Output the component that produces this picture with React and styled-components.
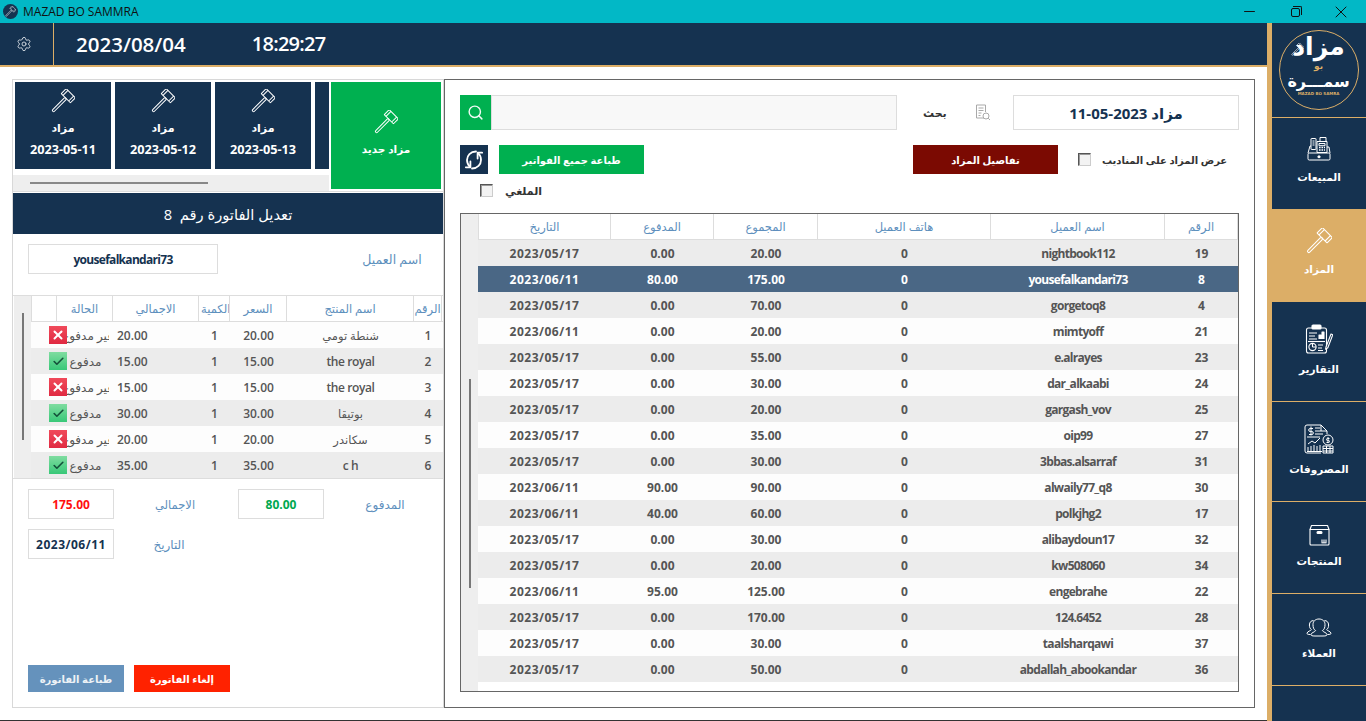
import React from 'react';
import styled, { createGlobalStyle } from 'styled-components';
import { Settings, Search, Minus, X, Check } from 'lucide-react';

const NAVY = '#153250';
const GOLD = '#dcae67';
const FONT = '"Open Sans", "Noto Sans", "DejaVu Sans", sans-serif';

const Global = createGlobalStyle`
  html, body { margin: 0; padding: 0; background: #fff; overflow: hidden; }
  * { box-sizing: border-box; }
  body { font-family: ${FONT}; }
`;

const Page = styled.div`width: 1366px; height: 721px; display: flex; flex-direction: column; overflow: hidden;`;
const TitleBar = styled.div`height: 23px; background: #02b8c6; display: flex; align-items: center; padding: 0 2px 0 3px; color: #111; font-size: 12px; flex: none;`;
const AppDot = styled.span`width: 15px; height: 15px; border-radius: 50%; background: ${NAVY}; margin-right: 5px; display: flex; align-items: center; justify-content: center; color: #fff;`;
const TitleText = styled.span`flex: 1;`;
const WinButton = styled.span`width: 46px; display: flex; justify-content: center; align-items: center; color: #111;`;
const Restore = styled.span`width: 9px; height: 9px; border: 1px solid #111; border-radius: 2px; position: relative; display: block; margin-top: 2px;
  &::after { content: ''; position: absolute; top: -3px; right: -3px; width: 8px; height: 8px; border-top: 1px solid #111; border-right: 1px solid #111; border-radius: 0 2px 0 0; }
`;
const Work = styled.div`flex: 1; display: flex; min-height: 0;`;
const Content = styled.div`width: 1267px; display: flex; flex-direction: column; border-bottom: 1px solid #333;`;
const Header = styled.div`height: 44px; background: ${NAVY}; border-bottom: 2px solid ${GOLD}; display: flex; color: #fff; flex: none;`;
const GearCell = styled.div`width: 54px; border-right: 1px solid ${GOLD}; display: flex; align-items: center; justify-content: center; padding-right: 5px; color: #dfe4ea;`;
const Clock = styled.div`font-size: ${p => p.$fs}px; letter-spacing: ${p => p.$ls}px; font-weight: 600; line-height: 42px; margin-left: ${p => p.$gap}px;`;
const Main = styled.div`display: flex; padding: 12px 0 0 12px; height: 641px;`;

const LeftPanel = styled.section`width: 432px; height: 629px; border: 1px solid #d8d8d8; display: flex; flex-direction: column;`;
const TopBand = styled.div`display: flex; height: 112px; flex: none; border-bottom: 1px solid #ddd;`;
const TileColumn = styled.div`width: 316px; display: flex; flex-direction: column;`;
const TileStrip = styled.div`display: flex; gap: 4px; padding: 2px 0 0 2px; overflow: hidden; height: 95px;`;
const Tile = styled.div`width: 96px; height: 87px; flex: none; background: ${NAVY}; color: #fff; display: flex; flex-direction: column; align-items: center; padding-top: 7px; font-weight: 700;`;
const TileLabel = styled.div`margin-top: 7px; line-height: 16px; font-size: 11px;`;
const TileDate = styled.div`margin-top: 5px; line-height: 16px; font-size: 12.7px;`;
const HScroll = styled.div`height: 16px; background: #eee; padding: 7px 0 0 17px;`;
const HThumb = styled.div`width: 178px; height: 2px; background: #888;`;
const NewTile = styled.div`width: 110px; height: 107px; margin: 2px 0 0 2px; background: #00b050; color: #fff; display: flex; flex-direction: column; align-items: center; padding-top: 28px; font-size: 10.5px; font-weight: 700;`;
const NewLabel = styled.div`margin-top: 6px; line-height: 18px;`;
const InvoiceTitle = styled.div`height: 41px; margin-top: 1px; background: ${NAVY}; color: #fff; display: flex; align-items: center; justify-content: center; font-size: 14.7px; font-weight: 500; flex: none; direction: rtl; white-space: pre;`;
const CustomerRow = styled.div`display: flex; align-items: center; padding: 10px 0 0 15px; height: 40px; flex: none;`;
const ValueBox = styled.div`width: ${p => p.$w}px; height: 30px; margin-left: ${p => p.$ml || 0}px; border: 1px solid #ddd; background: #fff; display: flex; align-items: center; justify-content: center; font-size: 12px; font-weight: 700; letter-spacing: ${p => p.$ls || 0}px; color: ${p => p.$color || NAVY}; flex: none;`;
const FieldLabel = styled.div`color: #5d8fbd; font-size: ${p => p.$fs || 12}px; font-weight: 500; text-align: center; width: ${p => p.$w}px; flex: none; margin-left: ${p => p.$ml || 0}px; white-space: nowrap;`;

const ItemsTable = styled.div`margin-top: 21px; height: 184px; border-top: 1px solid #ddd; border-bottom: 1px solid #ddd; display: flex; flex: none; padding-left: 1px;`;
const Gutter = styled.div`width: 17px; background: #eee; flex: none; padding: ${p => p.$top}px 0 0 8px;`;
const VThumb = styled.div`width: 2px; height: ${p => p.$h}px; background: #777;`;
const TableBody = styled.div`flex: 1; min-width: 0; display: flex; flex-direction: column; background: #fff;`;
const Row = styled.div`display: grid; grid-template-columns: ${p => p.$cols}; height: 26px; flex: none; align-items: center; position: relative; background: ${p => p.$selected ? '#4a6785' : p.$grey ? '#ececec' : '#fdfdfd'}; color: ${p => p.$selected ? '#fff' : '#555'}; font-size: 12px; font-weight: ${p => p.$fw || 600};`;
const HeadRow = styled.div`display: grid; grid-template-columns: ${p => p.$cols}; height: 26px; flex: none; background: #fff; border-bottom: 1px solid #ddd; color: #5d8fbd; font-size: 11.5px; font-weight: 500;`;
const HeadCell = styled.div`border-right: 1px solid #ddd; border-left: ${p => p.$first ? '1px solid #ddd' : '0'}; display: flex; align-items: center; overflow: hidden; white-space: nowrap; justify-content: ${p => p.$clip ? 'flex-start' : 'center'}; padding-left: ${p => p.$clip ? 2 : 0}px;`;
const Cell = styled.div`text-align: center; white-space: nowrap; overflow: hidden;`;
const DateCell = styled(Cell)`letter-spacing: .5px;`;
const ClientCell = styled(Cell)`letter-spacing: -.7px;`;
const ProductCell = styled(Cell)`letter-spacing: ${p => p.$ar ? 0 : -0.4}px; font-weight: ${p => p.$ar ? 500 : 600}; font-size: ${p => p.$ar ? 11.5 : 12}px;`;
const TotalCell = styled(Cell)`text-align: left; padding-left: 4px;`;
const StatusCell = styled.div`margin: 0 4px 0 5px; text-align: center; white-space: nowrap; overflow: hidden; font-size: 12px; font-weight: 500;`;
const Badge = styled.span`position: absolute; left: 18px; top: 4px; width: 18px; height: 18px; display: flex; align-items: center; justify-content: center; background: ${p => p.$ok ? 'linear-gradient(#7fdca0,#38c878)' : 'linear-gradient(#f04a5a,#e02a42)'}; color: ${p => p.$ok ? '#14503a' : '#fff'};`;

const TotalsRow = styled.div`display: flex; align-items: center; padding-left: 15px; margin-top: ${p => p.$mt}px; flex: none;`;
const ActionRow = styled.div`margin-top: auto; padding: 0 0 15px 15px; display: flex; gap: 10px; flex: none;`;
const ActionButton = styled.div`width: 96px; height: 27px; background: ${p => p.$bg}; color: ${p => p.$color || '#fff'}; display: flex; align-items: center; justify-content: center; font-size: 10px; font-weight: 700;`;

const RightPanel = styled.section`width: 811px; height: 629px; border: 1px solid #666; padding: 15px 15px 0; display: flex; flex-direction: column;`;
const SearchRow = styled.div`display: flex; align-items: center; height: 35px; flex: none;`;
const SearchButton = styled.div`width: 31px; height: 35px; background: #00b050; color: #f2fbf6; display: flex; align-items: center; justify-content: center; flex: none;`;
const SearchInput = styled.div`width: 406px; height: 35px; background: #f8f8f8; border: 1px solid #ddd; flex: none;`;
const SearchLabel = styled.div`margin-left: 26px; width: 22px; font-size: 11px; font-weight: 700; color: #333; text-align: center; flex: none;`;
const FileIcon = styled.span`margin-left: 30px; margin-right: 22px; display: flex; color: #a9a9a9;`;
const AuctionField = styled.div`width: 226px; height: 35px; border: 1px solid #ddd; display: flex; align-items: center; justify-content: center; font-size: 15px; font-weight: 700; color: ${NAVY}; flex: none;`;
const ToolRow = styled.div`display: flex; align-items: center; height: 29px; margin-top: 15px; flex: none;`;
const RefreshButton = styled.div`width: 28px; height: 29px; background: ${NAVY}; color: #fff; display: flex; align-items: center; justify-content: center; flex: none;`;
const PlainButton = styled.div`width: ${p => p.$w}px; height: 29px; margin-left: ${p => p.$ml}px; background: ${p => p.$bg}; color: #fff; display: flex; align-items: center; justify-content: center; font-size: 10px; font-weight: 700; flex: none;`;
const Box = styled.span`width: 13px; height: 13px; background: #f3f3f3; border: 1px solid #555; border-right-color: #ccc; border-bottom-color: #ccc; box-shadow: inset 1px 1px 0 #999; display: block; flex: none; margin-left: ${p => p.$ml}px;`;
const CheckLabel = styled.span`font-size: ${p => p.$fs}px; font-weight: 600; color: #333; margin-left: ${p => p.$ml}px; white-space: nowrap;`;
const CancelledRow = styled.div`display: flex; align-items: center; height: 18px; margin-top: 7px; flex: none;`;
const AuctionTable = styled.div`margin-top: 14px; width: 779px; height: 479px; border: 1px solid #666; display: flex; flex: none;`;

const Strip = styled.div`width: 5px; background: ${GOLD}; flex: none;`;
const Sidebar = styled.nav`width: 94px; background: ${NAVY}; flex: none; display: flex; flex-direction: column; color: #fff;`;
const LogoCell = styled.div`height: 95px; border-bottom: 1px solid ${GOLD}; display: flex; align-items: center; justify-content: center; flex: none; margin-left: -1px;`;
const LogoCircle = styled.div`width: 80px; height: 80px; border-radius: 50%; border: 1px solid ${GOLD}; display: flex; flex-direction: column; align-items: center; justify-content: flex-end; padding-bottom: 13px; position: relative; overflow: hidden; direction: rtl; font-family: "DejaVu Sans", sans-serif;`;
const LogoTop = styled.div`font-size: 25px; font-weight: 700; line-height: 29px;`;
const LogoGavel = styled.span`position: absolute; left: 11px; top: 12px; display: flex; color: #fff;`;
const LogoBo = styled.div`color: ${GOLD}; font-size: 9px; font-weight: 700; line-height: 11px;`;
const LogoBottom = styled.div`font-size: 16px; font-weight: 700; line-height: 19px;`;
const LogoSmall = styled.div`direction: ltr; color: ${GOLD}; font-size: 4px; font-weight: 700; line-height: 5px; white-space: nowrap;`;
const NavItem = styled.div`height: ${p => p.$h}px; flex: none; display: flex; flex-direction: column; align-items: center; padding-top: ${p => p.$pt}px; font-size: 10.5px; font-weight: 700; border-bottom: ${p => p.$line ? `1px solid ${GOLD}` : '0'}; background: ${p => p.$active ? GOLD : 'transparent'}; margin-left: ${p => p.$active ? -5 : 0}px; width: ${p => p.$active ? 99 : 94}px; padding-left: ${p => p.$active ? 5 : 0}px;`;
const NavLabel = styled.div`margin-top: 7px; line-height: 16px; white-space: nowrap;`;

const Gavel = ({ size = 24 }) => (
  <svg width={size} height={size} viewBox="0 0 24 24" fill="none" stroke="currentColor" strokeWidth="1" strokeLinejoin="round">
    <g transform="rotate(45 12 12)">
      <rect x="10.8" y="8" width="2.4" height="18.5" rx="1.2" />
      <rect x="5.5" y="1" width="13" height="7" rx=".4" />
      <path d="M8 1v7M16 1v7" />
    </g>
  </svg>
);
const Refresh = () => (
  <svg width="18" height="24" viewBox="0 0 18 24" fill="none" stroke="currentColor" strokeWidth="1.8" strokeLinecap="round" strokeLinejoin="round">
    <path d="M11 3.5C5.5 3.5 2 7.5 2 12c0 2.8 1 5 3 6.8" />
    <path d="M5.4 13.5v5.8H.8" />
    <path d="M7 20.5c5.5 0 9-4 9-8.5 0-2.8-1-5-3-6.8" />
    <path d="M12.6 10.5V4.7h4.6" />
  </svg>
);
const Register = () => (
  <svg width="26" height="26" viewBox="0 0 26 26" fill="none" stroke="currentColor" strokeWidth="1" strokeLinejoin="round">
    <rect x="2" y="17" width="22" height="7" rx="1.2" />
    <path d="M2 17l2-7h1M24 17l-1-6h-2" />
    <rect x="5" y="2.5" width="5" height="11" rx=".5" />
    <path d="M6.5 5h2M6.5 7h2M6.5 9h2" />
    <rect x="14" y="1.5" width="6" height="4" />
    <rect x="11" y="5.5" width="10" height="11" />
    <rect x="13" y="7.5" width="6" height="2.2" />
    <path d="M13 11.5h1.6M15.5 11.5h1.6M18 11.5h1M13 14h1.6M15.5 14h1.6M18 14h1" strokeWidth="1.4" />
    <rect x="12" y="20" width="2" height="1.6" fill="currentColor" />
  </svg>
);
const Report = () => (
  <svg width="28" height="30" viewBox="0 0 28 30" fill="none" stroke="currentColor" strokeWidth="1.1" strokeLinejoin="round">
    <rect x="1.5" y="4" width="20" height="25" rx="2" />
    <rect x="7" y="1" width="9" height="4" rx="1" fill="currentColor" />
    <path d="M4 9h8M4 12h6M4 15h8" />
    <path d="M14 15v-4h2v4M17 15V8h2v7" fill="currentColor" />
    <path d="M3 17.5h17" />
    <circle cx="7.5" cy="23" r="3.6" />
    <path d="M7.5 23v-3.6M7.5 23h3.6" />
    <path d="M13 21h5M13 24h4M13 26.5h5" />
    <path d="M21 23l5-13 1.8.8-5 13-2.2 1.4z" fill={NAVY} />
  </svg>
);
const Expense = () => (
  <svg width="30" height="30" viewBox="0 0 30 30" fill="none" stroke="currentColor" strokeWidth="1" strokeLinejoin="round">
    <path d="M17 29H3a2 2 0 0 1-2-2V3a2 2 0 0 1 2-2h14l6 6v3" />
    <path d="M17 1v6h6" />
    <path d="M7 2.5v9M9 4.5H6.2a1.4 1.4 0 0 0 0 3h1.6a1.4 1.4 0 0 1 0 3H5" />
    <path d="M11 4h5M11 7h6M11 10h8M3 13h13" />
    <path d="M4 20l4-3 3 2 5-5M4 27v-4M7 27v-5M10 27v-6M13 27v-5M16 27v-6M3 27.5h15" />
    <circle cx="24" cy="16" r="5" />
    <path d="M24 13v6M25.5 14.5h-2a1 1 0 0 0 0 2h1a1 1 0 0 1 0 2h-2" />
    <path d="M19 22h10v7H19zM19 24.5h10M19 27h10M22.5 22v7M26 22v7" />
  </svg>
);
const BoxIcon = () => (
  <svg width="21" height="22" viewBox="0 0 21 22" fill="none" stroke="currentColor" strokeWidth="1.1" strokeLinejoin="round">
    <path d="M1 5.5V20a1 1 0 0 0 1 1h17a1 1 0 0 0 1-1V5.5" />
    <path d="M1 5.5L2.5 1.5h16L20 5.5z" />
    <rect x="8" y="7.5" width="5" height="2" rx="1" fill="currentColor" />
    <path d="M13 18.5v-3M15 18.5v-3M17 18.5v-3" />
    <path d="M12.5 18.8h5" />
  </svg>
);
const Users = () => (
  <svg width="26" height="20" viewBox="0 0 26 20" fill="none" stroke="currentColor" strokeWidth="1" strokeLinejoin="round">
    <path d="M9 18c-3 0-4-.4-4-1.4 0-2 4-2.4 4.6-4-2-1-2.6-3.4-2.6-6C7 3 9.6 1 13 1s6 2 6 5.6c0 2.6-.6 5-2.6 6 .6 1.6 4.6 2 4.6 4 0 1-1 1.4-4 1.4z" />
    <path d="M7.6 2.6C5.4 2.4 3.4 4 3.4 7c0 2 .6 3.8 2 4.6-.4 1.2-4 1.6-4.4 3.6-.2.9 1 1.3 3.5 1.3" />
    <path d="M18.4 2.6c2.2-.2 4.2 1.4 4.2 4.4 0 2-.6 3.8-2 4.6.4 1.2 4 1.6 4.4 3.6.2.9-1 1.3-3.5 1.3" />
  </svg>
);
const FileCheck = () => (
  <svg width="16" height="17" viewBox="0 0 16 17" fill="none" stroke="currentColor" strokeWidth="1">
    <path d="M9 14H1.5V1h9v7" />
    <path d="M3.5 4h5M3.5 6.5h5M3.5 9h3M3.5 11.5h2" />
    <circle cx="11" cy="12" r="3" />
    <path d="M13.2 14.2L15 16" />
  </svg>
);

const TILES = ['2023-05-11', '2023-05-12', '2023-05-13'];
const ITEM_COLS = '26px 56px 86px 31px 57px 127px 28px';
const ITEMS = [
  ['1', 'شنطة تومي', '20.00', '1', '20.00', false, true],
  ['2', 'the royal', '15.00', '1', '15.00', true, false],
  ['3', 'the royal', '15.00', '1', '15.00', false, false],
  ['4', 'بوتيقا', '30.00', '1', '30.00', true, true],
  ['5', 'سكاندر', '20.00', '1', '20.00', false, true],
  ['6', 'c h', '35.00', '1', '35.00', true, false],
];
const AUCTION_COLS = '133px 103px 104px 173px 174px 73px';
const D1 = '2023/05/17';
const D2 = '2023/06/11';
const SALES = [
  ['19', 'nightbook112', '20.00', '0.00', D1],
  ['8', 'yousefalkandari73', '175.00', '80.00', D2],
  ['4', 'gorgetoq8', '70.00', '0.00', D1],
  ['21', 'mimtyoff', '20.00', '0.00', D2],
  ['23', 'e.alrayes', '55.00', '0.00', D1],
  ['24', 'dar_alkaabi', '30.00', '0.00', D1],
  ['25', 'gargash_vov', '20.00', '0.00', D1],
  ['27', 'oip99', '35.00', '0.00', D1],
  ['31', '3bbas.alsarraf', '30.00', '0.00', D1],
  ['30', 'alwaily77_q8', '90.00', '90.00', D2],
  ['17', 'polkjhg2', '60.00', '40.00', D2],
  ['32', 'alibaydoun17', '30.00', '0.00', D1],
  ['34', 'kw508060', '20.00', '0.00', D1],
  ['22', 'engebrahe', '125.00', '95.00', D2],
  ['28', '124.6452', '170.00', '0.00', D1],
  ['37', 'taalsharqawi', '30.00', '0.00', D1],
  ['36', 'abdallah_abookandar', '50.00', '0.00', D1],
];
const NAV = [
  { label: 'المبيعات', Icon: Register, h: 91, pt: 18 },
  { label: 'المزاد', Icon: () => <Gavel size={26} />, h: 93, pt: 19, active: true },
  { label: 'التقارير', Icon: Report, h: 100, pt: 22, line: true },
  { label: 'المصروفات', Icon: Expense, h: 100, pt: 22, line: true },
  { label: 'المنتجات', Icon: BoxIcon, h: 92, pt: 22, line: true },
  { label: 'العملاء', Icon: Users, h: 92, pt: 24, line: true },
];

export default function App() {
  return (
    <Page>
      <Global />
      <TitleBar>
        <AppDot><Gavel size={11} /></AppDot>
        <TitleText>MAZAD BO SAMMRA</TitleText>
        <WinButton><Minus size={17} strokeWidth={1.4} /></WinButton>
        <WinButton><Restore /></WinButton>
        <WinButton><X size={20} strokeWidth={1.2} /></WinButton>
      </TitleBar>
      <Work>
        <Content>
          <Header>
            <GearCell><Settings size={16} strokeWidth={1.3} /></GearCell>
            <Clock $gap={22} $fs={20.5} $ls={0}>2023/08/04</Clock>
            <Clock $gap={66} $fs={20} $ls={-0.75}>18:29:27</Clock>
          </Header>
          <Main>
            <LeftPanel>
              <TopBand>
                <TileColumn>
                  <TileStrip>
                    {TILES.map(d => (
                      <Tile key={d}>
                        <Gavel />
                        <TileLabel>مزاد</TileLabel>
                        <TileDate>{d}</TileDate>
                      </Tile>
                    ))}
                    <Tile />
                  </TileStrip>
                  <HScroll><HThumb /></HScroll>
                </TileColumn>
                <NewTile>
                  <Gavel />
                  <NewLabel>مزاد جديد</NewLabel>
                </NewTile>
              </TopBand>
              <InvoiceTitle>تعديل الفاتورة رقم  8</InvoiceTitle>
              <CustomerRow>
                <ValueBox $w={190} $ls={-0.7}>yousefalkandari73</ValueBox>
                <FieldLabel $w={60} $ml={144} $fs={12.5}>اسم العميل</FieldLabel>
              </CustomerRow>
              <ItemsTable>
                <Gutter $top={17}><VThumb $h={127} /></Gutter>
                <TableBody>
                  <HeadRow $cols={ITEM_COLS}>
                    <HeadCell $first />
                    <HeadCell>الحالة</HeadCell>
                    <HeadCell>الاجمالي</HeadCell>
                    <HeadCell $clip>الكمية</HeadCell>
                    <HeadCell>السعر</HeadCell>
                    <HeadCell>اسم المنتج</HeadCell>
                    <HeadCell>الرقم</HeadCell>
                  </HeadRow>
                  {ITEMS.map((r, i) => (
                    <Row key={r[0]} $cols={ITEM_COLS} $grey={i % 2 === 1}>
                      <span />
                      <StatusCell>{r[5] ? 'مدفوع' : 'غير مدفوع'}</StatusCell>
                      <TotalCell>{r[4]}</TotalCell>
                      <Cell>{r[3]}</Cell>
                      <Cell>{r[2]}</Cell>
                      <ProductCell $ar={r[6]}>{r[1]}</ProductCell>
                      <Cell>{r[0]}</Cell>
                      <Badge $ok={r[5]}>{r[5] ? <Check size={13} strokeWidth={3} /> : <X size={14} strokeWidth={3.4} />}</Badge>
                    </Row>
                  ))}
                </TableBody>
              </ItemsTable>
              <TotalsRow $mt={10}>
                <ValueBox $w={86} $color="#ff1010">175.00</ValueBox>
                <FieldLabel $w={40} $ml={41} $fs={11.5}>الاجمالي</FieldLabel>
                <ValueBox $w={86} $color="#00a84f" $ml={43}>80.00</ValueBox>
                <FieldLabel $w={40} $ml={41}>المدفوع</FieldLabel>
              </TotalsRow>
              <TotalsRow $mt={10}>
                <ValueBox $w={86} $ls={0.5}>2023/06/11</ValueBox>
                <FieldLabel $w={34} $ml={38}>التاريخ</FieldLabel>
              </TotalsRow>
              <ActionRow>
                <ActionButton $bg="#6592bc" $color="#eef2f6">طباعة الفاتورة</ActionButton>
                <ActionButton $bg="#ff2200">إلغاء الفاتورة</ActionButton>
              </ActionRow>
            </LeftPanel>
            <RightPanel>
              <SearchRow>
                <SearchButton><Search size={17} strokeWidth={2} /></SearchButton>
                <SearchInput />
                <SearchLabel>بحث</SearchLabel>
                <FileIcon><FileCheck /></FileIcon>
                <AuctionField>مزاد 2023-05-11</AuctionField>
              </SearchRow>
              <ToolRow>
                <RefreshButton><Refresh /></RefreshButton>
                <PlainButton $w={145} $ml={11} $bg="#00b050">طباعة جميع الفواتير</PlainButton>
                <PlainButton $w={145} $ml={269} $bg="#7b0a02">تفاصيل المزاد</PlainButton>
                <Box $ml={20} />
                <CheckLabel $ml={11} $fs={10}>عرض المزاد على المناديب</CheckLabel>
              </ToolRow>
              <CancelledRow>
                <Box $ml={20} />
                <CheckLabel $ml={12} $fs={11}>الملغي</CheckLabel>
              </CancelledRow>
              <AuctionTable>
                <Gutter $top={165}><VThumb $h={209} /></Gutter>
                <TableBody>
                  <HeadRow $cols={AUCTION_COLS}>
                    <HeadCell $first>التاريخ</HeadCell>
                    <HeadCell>المدفوع</HeadCell>
                    <HeadCell>المجموع</HeadCell>
                    <HeadCell>هاتف العميل</HeadCell>
                    <HeadCell>اسم العميل</HeadCell>
                    <HeadCell>الرقم</HeadCell>
                  </HeadRow>
                  {SALES.map((r, i) => (
                    <Row key={r[0]} $cols={AUCTION_COLS} $grey={i % 2 === 0} $selected={r[0] === '8'} $fw={700}>
                      <DateCell>{r[4]}</DateCell>
                      <Cell>{r[3]}</Cell>
                      <Cell>{r[2]}</Cell>
                      <Cell>0</Cell>
                      <ClientCell>{r[1]}</ClientCell>
                      <Cell>{r[0]}</Cell>
                    </Row>
                  ))}
                </TableBody>
              </AuctionTable>
            </RightPanel>
          </Main>
        </Content>
        <Strip />
        <Sidebar>
          <LogoCell>
            <LogoCircle>
              <LogoGavel><Gavel size={13} /></LogoGavel>
              <LogoTop>مزاد</LogoTop>
              <LogoBo>بو</LogoBo>
              <LogoBottom>سمـــرة</LogoBottom>
              <LogoSmall>MAZAD BO SAMRA</LogoSmall>
            </LogoCircle>
          </LogoCell>
          {NAV.map(n => (
            <NavItem key={n.label} $h={n.h} $pt={n.pt} $line={n.line} $active={n.active}>
              <n.Icon />
              <NavLabel>{n.label}</NavLabel>
            </NavItem>
          ))}
        </Sidebar>
      </Work>
    </Page>
  );
}
